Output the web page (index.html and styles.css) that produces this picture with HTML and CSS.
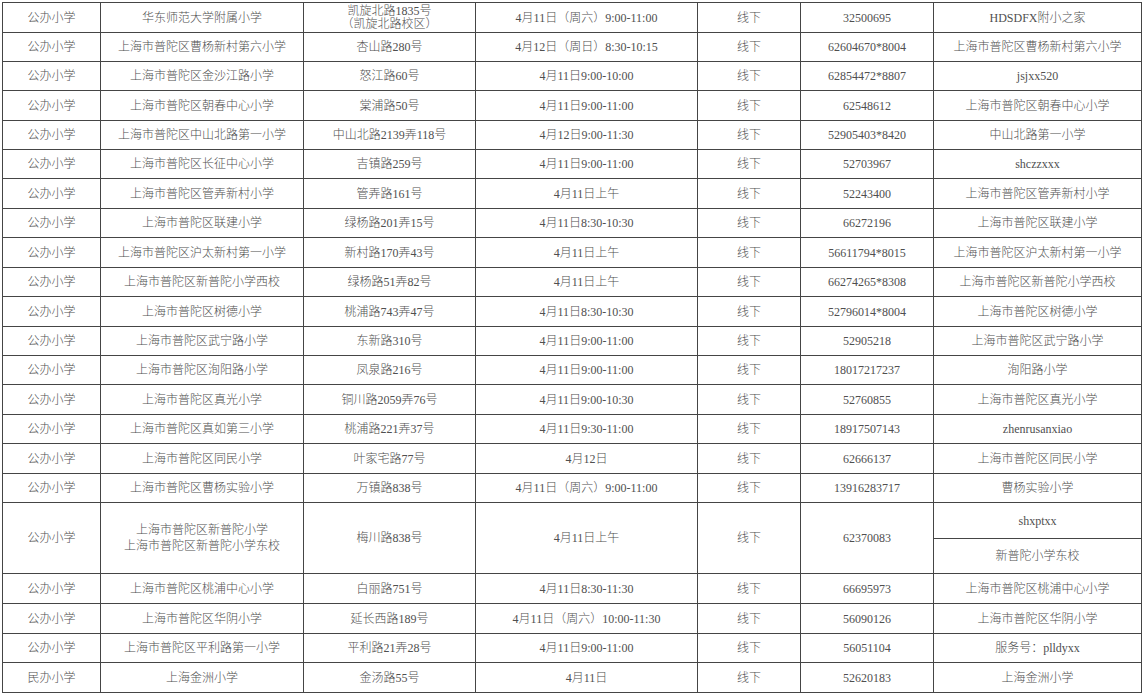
FILE: index.html
```html
<!DOCTYPE html>
<html lang="zh-CN">
<head>
<meta charset="utf-8">
<title>普陀区小学开放日安排</title>
<link rel="stylesheet" href="styles.css">
</head>
<body>
<div class="sheet">
<table class="grid">
<colgroup>
<col class="c1"><col class="c2"><col class="c3"><col class="c4"><col class="c5"><col class="c6"><col class="c7">
</colgroup>
<tbody>
<tr class="h30"><td>公办小学</td><td>华东师范大学附属小学</td><td class="two">凯旋北路1835号<br>（凯旋北路校区）</td><td>4月11日（周六）9:00-11:00</td><td>线下</td><td>32500695</td><td>HDSDFX附小之家</td></tr>
<tr><td>公办小学</td><td>上海市普陀区曹杨新村第六小学</td><td>杏山路280号</td><td>4月12日（周日）8:30-10:15</td><td>线下</td><td>62604670*8004</td><td>上海市普陀区曹杨新村第六小学</td></tr>
<tr><td>公办小学</td><td>上海市普陀区金沙江路小学</td><td>怒江路60号</td><td>4月11日9:00-10:00</td><td>线下</td><td>62854472*8807</td><td>jsjxx520</td></tr>
<tr class="h30"><td>公办小学</td><td>上海市普陀区朝春中心小学</td><td>棠浦路50号</td><td>4月11日9:00-11:00</td><td>线下</td><td>62548612</td><td>上海市普陀区朝春中心小学</td></tr>
<tr><td>公办小学</td><td>上海市普陀区中山北路第一小学</td><td>中山北路2139弄118号</td><td>4月12日9:00-11:30</td><td>线下</td><td>52905403*8420</td><td>中山北路第一小学</td></tr>
<tr><td>公办小学</td><td>上海市普陀区长征中心小学</td><td>吉镇路259号</td><td>4月11日9:00-11:00</td><td>线下</td><td>52703967</td><td>shczzxxx</td></tr>
<tr class="h30"><td>公办小学</td><td>上海市普陀区管弄新村小学</td><td>管弄路161号</td><td>4月11日上午</td><td>线下</td><td>52243400</td><td>上海市普陀区管弄新村小学</td></tr>
<tr><td>公办小学</td><td>上海市普陀区联建小学</td><td>绿杨路201弄15号</td><td>4月11日8:30-10:30</td><td>线下</td><td>66272196</td><td>上海市普陀区联建小学</td></tr>
<tr class="h30"><td>公办小学</td><td>上海市普陀区沪太新村第一小学</td><td>新村路170弄43号</td><td>4月11日上午</td><td>线下</td><td>56611794*8015</td><td>上海市普陀区沪太新村第一小学</td></tr>
<tr><td>公办小学</td><td>上海市普陀区新普陀小学西校</td><td>绿杨路51弄82号</td><td>4月11日上午</td><td>线下</td><td>66274265*8308</td><td>上海市普陀区新普陀小学西校</td></tr>
<tr class="h30"><td>公办小学</td><td>上海市普陀区树德小学</td><td>桃浦路743弄47号</td><td>4月11日8:30-10:30</td><td>线下</td><td>52796014*8004</td><td>上海市普陀区树德小学</td></tr>
<tr><td>公办小学</td><td>上海市普陀区武宁路小学</td><td>东新路310号</td><td>4月11日9:00-11:00</td><td>线下</td><td>52905218</td><td>上海市普陀区武宁路小学</td></tr>
<tr><td>公办小学</td><td>上海市普陀区洵阳路小学</td><td>凤泉路216号</td><td>4月11日9:00-11:00</td><td>线下</td><td>18017217237</td><td>洵阳路小学</td></tr>
<tr class="h30"><td>公办小学</td><td>上海市普陀区真光小学</td><td>铜川路2059弄76号</td><td>4月11日9:00-10:30</td><td>线下</td><td>52760855</td><td>上海市普陀区真光小学</td></tr>
<tr><td>公办小学</td><td>上海市普陀区真如第三小学</td><td>桃浦路221弄37号</td><td>4月11日9:30-11:00</td><td>线下</td><td>18917507143</td><td>zhenrusanxiao</td></tr>
<tr class="h30"><td>公办小学</td><td>上海市普陀区同民小学</td><td>叶家宅路77号</td><td>4月12日</td><td>线下</td><td>62666137</td><td>上海市普陀区同民小学</td></tr>
<tr><td>公办小学</td><td>上海市普陀区曹杨实验小学</td><td>万镇路838号</td><td>4月11日（周六）9:00-11:00</td><td>线下</td><td>13916283717</td><td>曹杨实验小学</td></tr>
<tr class="h36"><td rowspan="2">公办小学</td><td rowspan="2" class="two">上海市普陀区新普陀小学<br>上海市普陀区新普陀小学东校</td><td rowspan="2">梅川路838号</td><td rowspan="2">4月11日上午</td><td rowspan="2">线下</td><td rowspan="2">62370083</td><td>shxptxx</td></tr>
<tr class="h35"><td>新普陀小学东校</td></tr>
<tr class="h30"><td>公办小学</td><td>上海市普陀区桃浦中心小学</td><td>白丽路751号</td><td>4月11日8:30-11:30</td><td>线下</td><td>66695973</td><td>上海市普陀区桃浦中心小学</td></tr>
<tr class="h30"><td>公办小学</td><td>上海市普陀区华阴小学</td><td>延长西路189号</td><td>4月11日（周六）10:00-11:30</td><td>线下</td><td>56090126</td><td>上海市普陀区华阴小学</td></tr>
<tr><td>公办小学</td><td>上海市普陀区平利路第一小学</td><td>平利路21弄28号</td><td>4月11日9:00-11:00</td><td>线下</td><td>56051104</td><td>服务号：plldyxx</td></tr>
<tr class="h30"><td>民办小学</td><td>上海金洲小学</td><td>金汤路55号</td><td>4月11日</td><td>线下</td><td>52620183</td><td>上海金洲小学</td></tr>
</tbody>
</table>
</div>
</body>
</html>
```

FILE: styles.css
```css
html, body {
  margin: 0;
  padding: 0;
  background: #ffffff;
}

.sheet {
  padding: 2px 0 0 2px;
}

.grid {
  border-collapse: collapse;
  table-layout: fixed;
  width: 1140px;
  font-family: "Liberation Serif", "Noto Sans CJK SC", serif;
  font-size: 12px;
  font-weight: 300;
  color: #4f4f4f;
}

.c1 { width: 98px; }
.c2 { width: 203px; }
.c3 { width: 172px; }
.c4 { width: 222px; }
.c5 { width: 103px; }
.c6 { width: 133px; }
.c7 { width: 208px; }

.grid td {
  border: 1px solid #454545;
  padding: 0;
  text-align: center;
  vertical-align: middle;
  line-height: 14px;
  white-space: nowrap;
  overflow: hidden;
}

.grid tr { height: 29px; }
.grid tr.h30 { height: 30px; }
.grid tr.h36 { height: 36px; }
.grid tr.h35 { height: 35px; }

.grid td.two { line-height: 13px; }
.grid tr.h36 td.two { line-height: 16px; }
```
